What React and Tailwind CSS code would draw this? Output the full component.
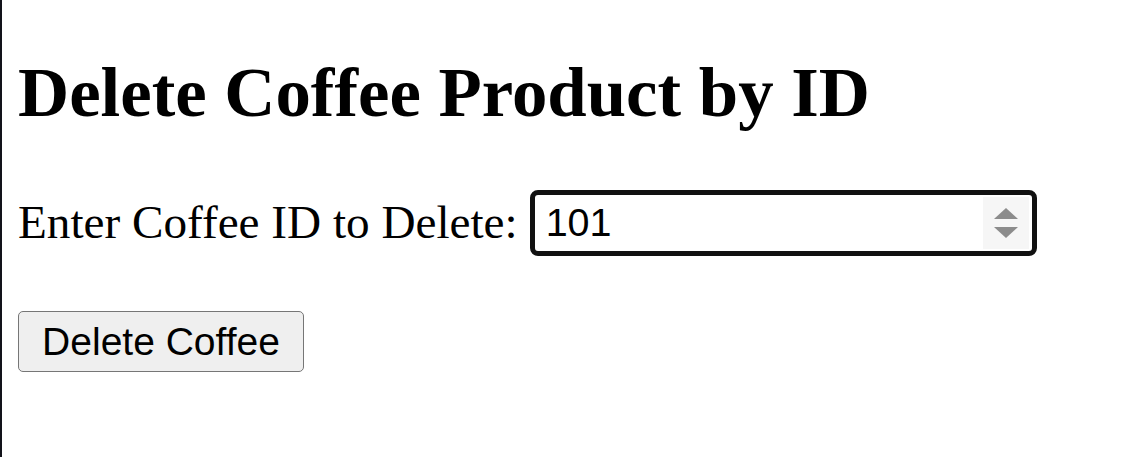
export default function App() {
  return (
    <div className="w-[1143px] h-[457px] bg-white border-l-2 border-[#12131a] pl-[16px] overflow-hidden">
      <h1
        className="text-[70.8px] font-bold leading-none text-black pt-[57px]"
        style={{ fontFamily: '"Liberation Serif", "Times New Roman", serif' }}
      >
        Delete Coffee Product by ID
      </h1>
      <div className="flex items-center mt-[62px]">
        <label
          className="text-[47.2px] leading-none text-black"
          style={{ fontFamily: '"Liberation Serif", "Times New Roman", serif' }}
        >
          Enter Coffee ID to Delete:
        </label>
        <div className="ml-[12px] w-[507px] h-[66px] border-[5px] border-[#111111] rounded-[8px] bg-white flex items-center pl-[11px] pr-[3px]">
          <span
            className="flex-1 text-[39.5px] leading-none text-black"
            style={{ fontFamily: '"Liberation Sans", Arial, sans-serif' }}
          >
            101
          </span>
          <div className="w-[46px] h-[52px] bg-[#f6f6f6] flex flex-col items-center justify-center gap-[8px]">
            <svg width="24" height="11" viewBox="0 0 24 11">
              <polygon points="12,0 24,11 0,11" fill="#8c8c8c" />
            </svg>
            <svg width="24" height="11" viewBox="0 0 24 11">
              <polygon points="0,0 24,0 12,11" fill="#8c8c8c" />
            </svg>
          </div>
        </div>
      </div>
      <button
        className="mt-[55px] w-[286px] h-[61px] border border-[#767676] rounded-[5px] bg-[#efefef] text-[39px] leading-none text-black flex items-center justify-center"
        style={{ fontFamily: '"Liberation Sans", Arial, sans-serif' }}
      >
        Delete Coffee
      </button>
    </div>
  );
}
